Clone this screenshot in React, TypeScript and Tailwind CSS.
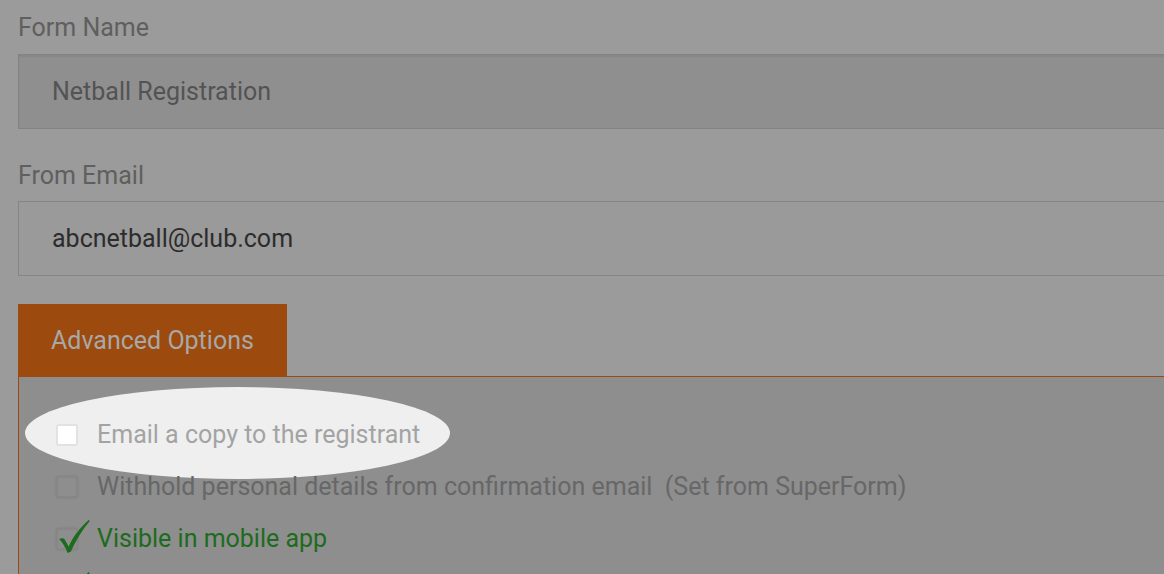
import type { ReactNode } from 'react';

// Green hand-drawn style tick used for checked options
function Tick() {
  return (
    <svg width="34" height="36" viewBox="0 0 32 34" className="absolute -top-[11px] left-[0px]">
      <path
        d="M1 19 C3 18 5 18 6 19 L10 26 C14 17 21 8 29 1 L30 2 C23 10 17 20 12 31 L9 32 C7 27 4 22 1 19 Z"
        fill="#1d6b1d"
      />
    </svg>
  );
}

function OptionRow({
  children,
  state,
  textClass = '',
}: {
  children?: ReactNode;
  state: 'highlight' | 'off' | 'on';
  textClass?: string;
}) {
  const boxClass =
    state === 'highlight'
      ? 'bg-white border-[#e2e2e2]'
      : 'bg-[#8e8e8e] border-[#878787] shadow-[0_0_2px_rgba(0,0,0,0.15)]';
  return (
    <div className="relative flex h-[52px] items-center">
      <div className={`relative h-[22px] w-[22px] shrink-0 rounded-[3px] border-2 ${boxClass}`}>
        {state === 'on' && <Tick />}
      </div>
      {children && (
        <span className={`ml-[19px] whitespace-pre text-[25px] leading-[28px] ${textClass}`}>{children}</span>
      )}
    </div>
  );
}

export default function App() {
  return (
    <div
      className="h-[574px] w-[1164px] overflow-hidden bg-[#9b9b9b]"
      style={{ fontFamily: 'Roboto, "Liberation Sans", sans-serif' }}
    >
      <div className="w-[1300px] pl-[18px] pt-[14px]">
        {/* Form name */}
        <div className="text-[25px] leading-[28px] text-[#5f5f5f]">Form Name</div>
        <div className="mt-[12px] flex h-[75px] items-center border border-[#838383] bg-[#8f8f8f] pl-[33px] shadow-[inset_0_2px_2px_rgba(0,0,0,0.06)]">
          <span className="text-[25px] text-[#535353]">Netball Registration</span>
        </div>

        {/* From email */}
        <div className="mt-[33px] text-[25px] leading-[28px] text-[#5f5f5f]">From Email</div>
        <div className="mt-[11px] flex h-[75px] items-center border border-[#858585] bg-[#9a9a9a] pl-[33px]">
          <span className="text-[25px] text-[#2c2c2c]">abcnetball@club.com</span>
        </div>

        {/* Advanced options tab */}
        <div className="mt-[28px] flex h-[72px] w-[269px] items-center bg-[#9c4a0e] pl-[33px] pt-[2px]">
          <span className="text-[25px] text-[#a8a8a8]">Advanced Options</span>
        </div>

        <div className="relative border border-[#9c4a0e] bg-[#8e8e8e] pb-[20px] pl-[37px] pt-[32px]">
          {/* spotlight over the first option */}
          <div className="absolute left-[6px] top-[10px] h-[92px] w-[425px] rounded-[50%] bg-[#efefef]" />
          <OptionRow state="highlight" textClass="text-[#a3a3a3]">
            Email a copy to the registrant
          </OptionRow>
          <OptionRow state="off" textClass="text-[#676767]">
            {'Withhold personal details from confirmation email  (Set from SuperForm)'}
          </OptionRow>
          <OptionRow state="on" textClass="text-[#1d6b1d]">
            Visible in mobile app
          </OptionRow>
          <OptionRow state="on" />
        </div>
      </div>
    </div>
  );
}
